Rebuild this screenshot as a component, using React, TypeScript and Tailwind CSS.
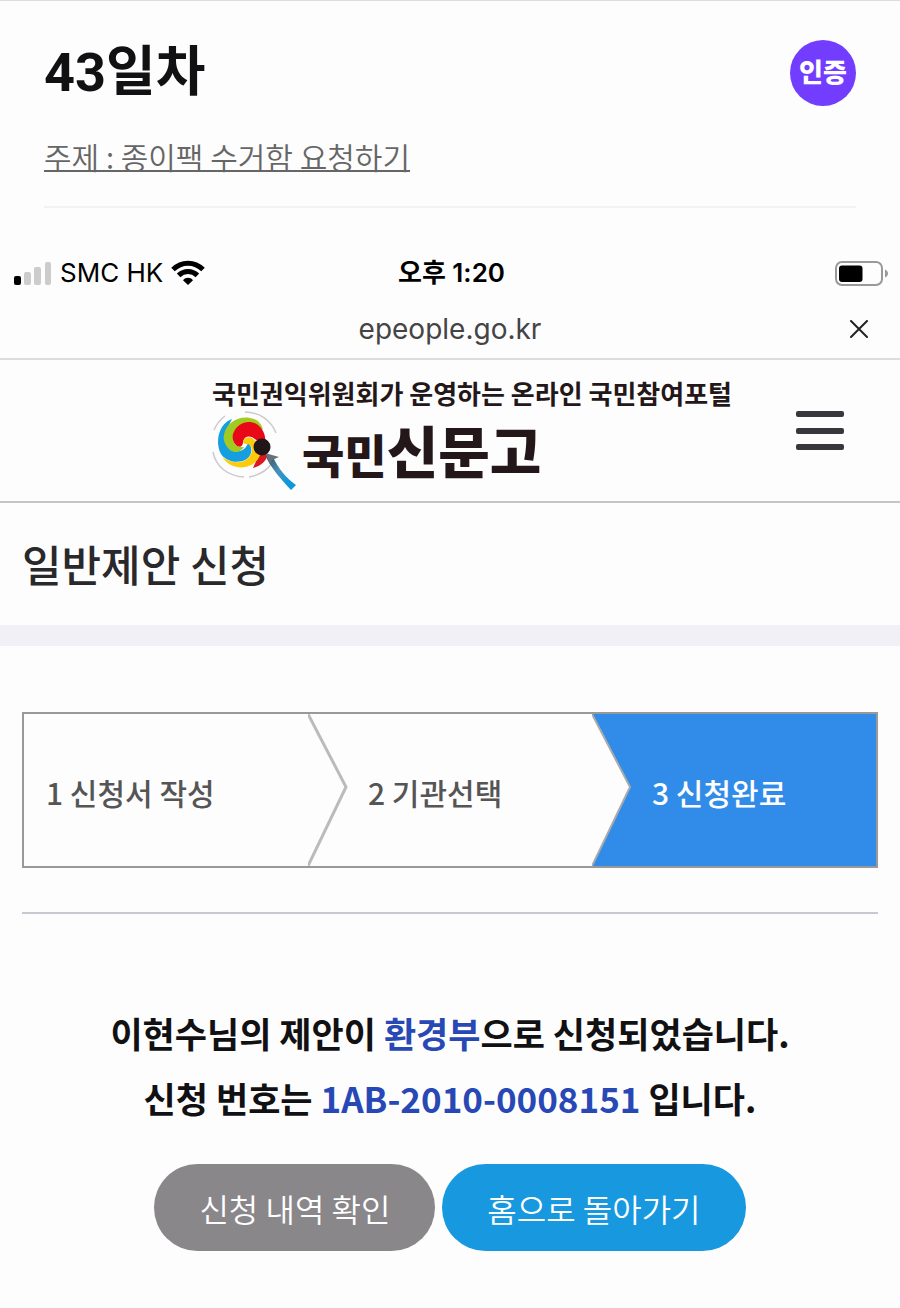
import { ReactNode } from 'react'

function SignalIcon() {
  return (
    <svg width="38" height="24" viewBox="0 0 38 24" aria-hidden="true">
      <rect x="0" y="15" width="7" height="9" rx="2" fill="#000" />
      <rect x="10" y="11" width="7" height="13" rx="2" fill="#ccc" />
      <rect x="20" y="6" width="7" height="18" rx="2" fill="#ccc" />
      <rect x="31" y="1" width="6" height="23" rx="2" fill="#ccc" />
    </svg>
  )
}

function WifiIcon() {
  return (
    <svg width="34" height="26" viewBox="0 0 34 26" fill="none" stroke="#000" strokeWidth="5" aria-hidden="true">
      <path d="M2 9.5C10.5 1 23.5 1 32 9.5" />
      <path d="M7.6 15.4C13 10.2 21 10.2 26.4 15.4" />
      <path d="M12 20.2C15 17 19 17 22 20.2L17 25Z" fill="#000" stroke="none" />
    </svg>
  )
}

function BatteryIcon() {
  return (
    <svg width="54" height="25" viewBox="0 0 54 25" aria-hidden="true">
      <rect x="1" y="1" width="46" height="23" rx="6" fill="none" stroke="#999" strokeWidth="2" />
      <rect x="4" y="4.5" width="23.5" height="16.5" rx="3" fill="#000" />
      <path d="M50 8.5C54 10 54 15 50 16.5Z" fill="#999" />
    </svg>
  )
}

function LogoMark() {
  return (
    <svg width="90" height="82" viewBox="0 0 90 82" aria-hidden="true">
      <defs>
        <linearGradient id="handle" x1="0" y1="0" x2="1" y2="1">
          <stop offset="0" stopColor="#3b4650" />
          <stop offset="0.45" stopColor="#4a90b8" />
          <stop offset="0.75" stopColor="#0d98dc" />
        </linearGradient>
      </defs>
      <g fill="none" stroke="#c9c9ce" strokeWidth="1.4">
        <path d="M33 1C47 1 59 9 64 22" />
        <path d="M2 19C5 12 9 8 13 5" />
        <path d="M1 41C4 56 16 65 32 66" />
        <path d="M37 66C48 64 56 58 60 52" />
      </g>
      <path d="M20 8C8 12 3 28 8 41C12 51 28 54 36 47C41 42 40 35 36 32C34 38 29 41 24 40C14 37 11 24 16 16Z" fill="#159fe0" />
      <path d="M12 24C14 10 30 3 42 8C47 10 50 14 51 19C40 9 26 11 22 22C19 31 24 37 32 36C28 43 20 42 16 37C12 32 11 28 12 24Z" fill="#a2cb20" />
      <path d="M21 23C25 11 38 8 46 14C52 19 54 26 53 31L44 29C38 23 32 25 31 31C31 36 27 37 24 34C21 31 20 27 21 23Z" fill="#e80817" />
      <path d="M46 39L56 44C54 50 49 55 41 57C43 52 47 46 46 39Z" fill="#db171f" />
      <path d="M31 30C35 23 43 26 46 35L48 44C44 57 22 63 10 46C20 53 32 53 37 46C42 40 40 35 36 33C33 34 31 32 31 30Z" fill="#fccb0b" />
      <path d="M54 42L61 46C66 57 74 67 84 74L79 79C69 68 60 58 55 48Z" fill="url(#handle)" />
      <path d="M53 42L67 46L60 49L58 53Z" fill="#65717b" />
      <circle cx="50" cy="36" r="8.5" fill="#211719" />
    </svg>
  )
}

function CertifiedBadge() {
  return (
    <span className="flex size-[66px] items-center justify-center rounded-full bg-[#733dff] text-[26px] leading-9 font-black text-white">
      인증
    </span>
  )
}

function Highlight({ children }: { children: ReactNode }) {
  return <strong className="font-bold text-[#2848b5]">{children}</strong>
}

const PILL = 'h-[87px] rounded-full px-[45px] text-[32px] leading-10 font-[350] text-white'

export default function App() {
  return (
    <div className="min-h-screen border-t border-[#ddd] bg-[#fdfdfd] font-[Inter,'Noto_Sans_CJK_KR',sans-serif] text-[#111113]">
      <header className="mx-11 border-b-2 border-[#f2f2f2] pt-[39px] pb-7">
        <div className="flex items-center justify-between">
          <h1 className="font-[Roboto,'Noto_Sans_CJK_KR',sans-serif] text-[54px] leading-[66px] font-bold">43일차</h1>
          <CertifiedBadge />
        </div>
        <p className="mt-7 font-['Noto_Sans_CJK_KR',sans-serif] text-[30px] leading-[44px] font-[350] text-[#666] underline decoration-2">
          주제 : 종이팩 수거함 요청하기
        </p>
      </header>

      <section>
        <div className="grid grid-cols-3 items-center pt-[47px] pr-[11px] pl-[14px] text-[26px] leading-9 text-black">
          <div className="flex items-center gap-2">
            <SignalIcon />
            <span>SMC HK</span>
            <WifiIcon />
          </div>
          <time className="text-center font-semibold">오후 1:20</time>
          <div className="flex justify-end">
            <BatteryIcon />
          </div>
        </div>

        <div className="grid grid-cols-[1fr_auto_1fr] items-center border-b-2 border-[#ddd] px-8 pt-4 pb-[7px]">
          <span className="col-start-2 text-[28px] leading-[44px] text-[#444]">epeople.go.kr</span>
          <button type="button" aria-label="닫기" className="justify-self-end">
            <svg width="18" height="18" viewBox="0 0 18 18" stroke="#222" strokeWidth="2" strokeLinecap="round">
              <path d="M1 1L17 17M17 1L1 17" />
            </svg>
          </button>
        </div>

        <nav className="flex items-start justify-between border-b-2 border-[#c5c5c5] pt-[15px] pr-14 pb-2 pl-[212px]">
          <a href="#home" className="font-['Noto_Sans_CJK_KR',sans-serif] text-[#241719]">
            <span className="block text-[26px] leading-9 font-bold">국민권익위원회가 운영하는 온라인 국민참여포털</span>
            <span className="flex h-[82px] items-start">
              <LogoMark />
              <span className="text-[56px] leading-[76px] font-black">
                <span className="text-[46px]">국민</span>신문고
              </span>
            </span>
          </a>
          <button type="button" aria-label="메뉴" className="mt-9">
            <svg width="48" height="40" viewBox="0 0 48 40" fill="#38373b">
              <rect width="48" height="6" rx="2" />
              <rect y="17" width="48" height="6" rx="2" />
              <rect y="33" width="48" height="6" rx="2" />
            </svg>
          </button>
        </nav>
      </section>

      <main className="font-['Noto_Sans_CJK_KR',sans-serif]">
        <h2 className="border-b-[21px] border-[#f0f0f6] px-[22px] pt-[30px] pb-8 text-[43px] leading-[60px] font-medium text-[#29282b]">
          일반제안 신청
        </h2>

        <div className="mx-[22px] border-b-2 border-[#c9c8d0] pt-[66px] pb-11">
          <ol className="grid grid-cols-3 border-2 border-[#999] text-[30px] leading-[148px] font-medium text-[#555]">
            <li className="pt-1 pl-[22px]">1 신청서 작성</li>
            <li className="relative pt-1 pl-[60px]">
              <svg className="absolute top-0 left-0 h-full w-10" viewBox="0 0 40 152" preserveAspectRatio="none" fill="none" stroke="#bbb" strokeWidth="3">
                <path d="M0 0L38 73L0 152" />
              </svg>
              2 기관선택
            </li>
            <li className="relative bg-[#318ce9] pt-1 pl-[60px] text-white">
              <svg className="absolute top-0 left-0 h-full w-10" viewBox="0 0 40 152" preserveAspectRatio="none" fill="#fdfdfd" stroke="#aaa" strokeWidth="2">
                <path d="M0 0L38 73L0 152" />
              </svg>
              3 신청완료
            </li>
          </ol>
        </div>

        <p className="pt-[86px] text-center text-[35px] leading-[65px] font-bold">
          이현수님의 제안이 <Highlight>환경부</Highlight>으로 신청되었습니다.
          <br />
          신청 번호는 <Highlight>1AB-2010-0008151</Highlight> 입니다.
        </p>

        <div className="flex flex-wrap justify-center gap-[7px] pt-[34px] pb-14">
          <button type="button" className={`${PILL} bg-[#8a878b]`}>
            신청 내역 확인
          </button>
          <button type="button" className={`${PILL} bg-[#1798df]`}>
            홈으로 돌아가기
          </button>
        </div>
      </main>
    </div>
  )
}
